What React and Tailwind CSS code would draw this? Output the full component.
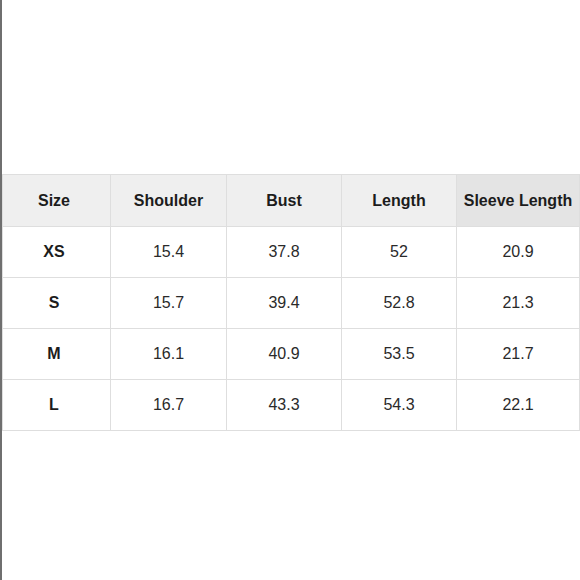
import React from 'react';

const headers = ['Size', 'Shoulder', 'Bust', 'Length', 'Sleeve Length'];

const rows = [
  ['XS', '15.4', '37.8', '52', '20.9'],
  ['S', '15.7', '39.4', '52.8', '21.3'],
  ['M', '16.1', '40.9', '53.5', '21.7'],
  ['L', '16.7', '43.3', '54.3', '22.1'],
];

const App = () => {
  return (
    <div
      className="w-[580px] h-[580px] bg-white border-l-2 border-[#6f6f6f] pt-[174px] overflow-hidden"
      style={{ fontFamily: '"Liberation Sans", Arial, sans-serif' }}
    >
      <table className="table-fixed border-collapse w-[577px] text-[16px] text-[#1c1c1c]">
        <colgroup>
          <col className="w-[108px]" />
          <col className="w-[116px]" />
          <col className="w-[115px]" />
          <col className="w-[115px]" />
          <col className="w-[123px]" />
        </colgroup>
        <thead>
          <tr className="h-[52px]">
            {headers.map((h, i) => (
              <th
                key={h}
                className={`border border-[#dedede] font-bold text-center ${
                  i === 4 ? 'bg-[#e4e4e4]' : 'bg-[#efefef]'
                } ${i === 0 ? 'pr-[5px]' : ''}`}
              >
                {h}
              </th>
            ))}
          </tr>
        </thead>
        <tbody>
          {rows.map((row) => (
            <tr key={row[0]} className="h-[51px]">
              {row.map((cell, i) => (
                <td
                  key={i}
                  className={`border border-[#dedede] text-center ${
                    i === 0 ? 'font-bold pr-[5px]' : 'font-normal text-[#2a2a2a]'
                  }`}
                >
                  {cell}
                </td>
              ))}
            </tr>
          ))}
        </tbody>
      </table>
    </div>
  );
};

export default App;
